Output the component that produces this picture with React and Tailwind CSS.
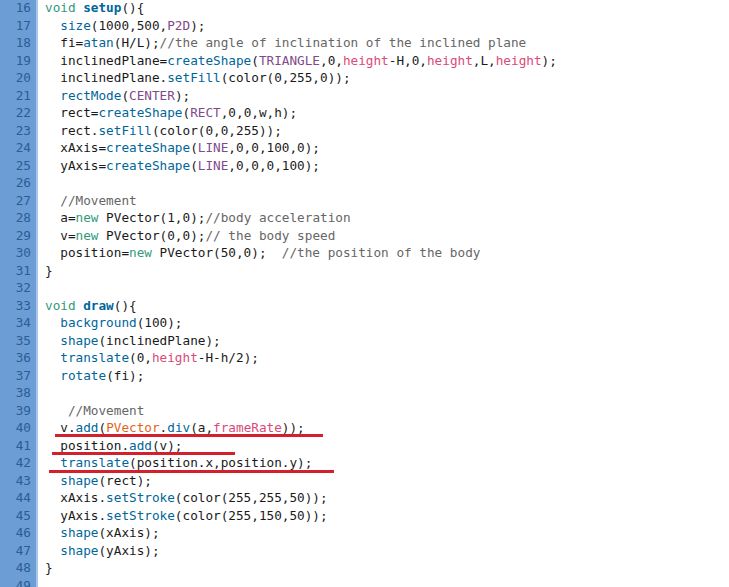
const K = 'text-[#33997e]';
const F = 'text-[#006699]';
const FB = 'text-[#006699] font-bold';
const C = 'text-[#7f4a8c]';
const H = 'text-[#d94a7a]';
const O = 'text-[#e2661a]';
const M = 'text-[#666666]';

const lines = [
  [[K, 'void'], ' ', [FB, 'setup'], '(){'],
  ['  ', [F, 'size'], '(1000,500,', [C, 'P2D'], ');'],
  ['  fi=', [F, 'atan'], '(H/L);', [M, '//the angle of inclination of the inclined plane']],
  ['  inclinedPlane=', [F, 'createShape'], '(', [C, 'TRIANGLE'], ',0,', [H, 'height'], '-H,0,', [H, 'height'], ',L,', [H, 'height'], ');'],
  ['  inclinedPlane.', [F, 'setFill'], '(color(0,255,0));'],
  ['  ', [F, 'rectMode'], '(', [C, 'CENTER'], ');'],
  ['  rect=', [F, 'createShape'], '(', [C, 'RECT'], ',0,0,w,h);'],
  ['  rect.', [F, 'setFill'], '(color(0,0,255));'],
  ['  xAxis=', [F, 'createShape'], '(', [C, 'LINE'], ',0,0,100,0);'],
  ['  yAxis=', [F, 'createShape'], '(', [C, 'LINE'], ',0,0,0,100);'],
  [],
  ['  ', [M, '//Movement']],
  ['  a=', [K, 'new'], ' PVector(1,0);', [M, '//body acceleration']],
  ['  v=', [K, 'new'], ' PVector(0,0);', [M, '// the body speed']],
  ['  position=', [K, 'new'], ' PVector(50,0);  ', [M, '//the position of the body']],
  ['}'],
  [],
  [[K, 'void'], ' ', [FB, 'draw'], '(){'],
  ['  ', [F, 'background'], '(100);'],
  ['  ', [F, 'shape'], '(inclinedPlane);'],
  ['  ', [F, 'translate'], '(0,', [H, 'height'], '-H-h/2);'],
  ['  ', [F, 'rotate'], '(fi);'],
  [],
  ['   ', [M, '//Movement']],
  ['  v.', [F, 'add'], '(', [O, 'PVector'], '.', [F, 'div'], '(a,', [H, 'frameRate'], '));'],
  ['  position.', [F, 'add'], '(v);'],
  ['  ', [F, 'translate'], '(position.x,position.y);'],
  ['  ', [F, 'shape'], '(rect);'],
  ['  xAxis.', [F, 'setStroke'], '(color(255,255,50));'],
  ['  yAxis.', [F, 'setStroke'], '(color(255,150,50));'],
  ['  ', [F, 'shape'], '(xAxis);'],
  ['  ', [F, 'shape'], '(yAxis);'],
  ['}'],
  [],
];

// red marks drawn over lines 40-42
const marks = {
  40: 'left-[55px] w-[268px] top-[15px]',
  41: 'left-[52px] w-[183px] top-[15px]',
  42: 'left-[49px] w-[285px] top-[16px]',
};

export default function App() {
  return (
    <div className="w-[729px] h-[587px] overflow-hidden bg-white font-['DejaVu_Sans_Mono','Liberation_Mono',monospace] text-[12.7px] text-[#1a1a1a]">
      <div className="-mt-[1px]">
        {lines.map((tokens, i) => {
          const n = i + 16;
          return (
            <div key={n} className="relative flex h-[17.5px] leading-[17.5px]">
              <div className="w-[36px] shrink-0 bg-[#6c9dd5] pr-[5px] text-right text-[#2b5e93]">{n}</div>
              <div className="w-[2px] shrink-0 bg-[#a8c7ea]" />
              <pre className="pl-[7px] font-['DejaVu_Sans_Mono','Liberation_Mono',monospace] whitespace-pre">
                {tokens.map((t, j) =>
                  typeof t === 'string' ? t : <span key={j} className={t[0]}>{t[1]}</span>
                )}
              </pre>
              {marks[n] && <div className={`absolute h-[3px] bg-[#d4202c] ${marks[n]}`} />}
            </div>
          );
        })}
      </div>
    </div>
  );
}
